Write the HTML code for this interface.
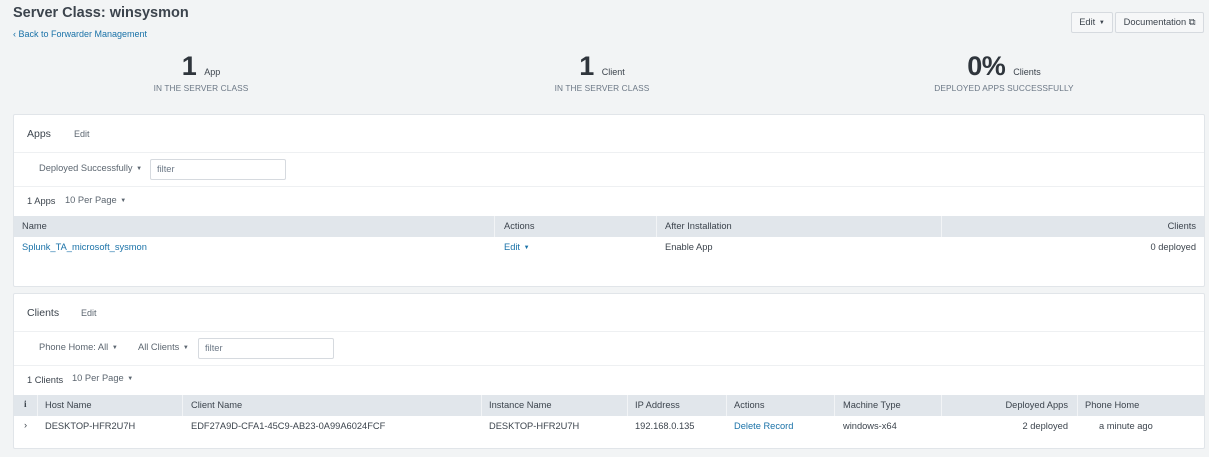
<!DOCTYPE html>
<html><head><meta charset="utf-8"><style>
*{box-sizing:border-box;margin:0;padding:0}
body{width:1209px;height:457px;background:#f2f4f5;font-family:"Liberation Sans",sans-serif;color:#3c444d;position:relative;overflow:hidden;font-size:9.3px}
.a{position:absolute;white-space:nowrap}
.blue{color:#1a72a8}
.btn{position:absolute;top:12px;height:21px;border:1px solid #d6dadf;border-radius:2px;background:#f6f7f8;font-size:9.3px;line-height:19px;text-align:center;color:#3c444d}
.stat{position:absolute;width:300px;text-align:center}
.big{font-size:27px;font-weight:bold;color:#2f353c;letter-spacing:-0.5px}
.unit{font-size:9px;margin-left:8px}
.lab{font-size:8.3px;color:#6b7785;letter-spacing:0.1px;margin-top:1px}
.panel{position:absolute;left:13px;width:1192px;background:#fff;border:1px solid #e1e5e9;border-radius:2px}
.line{position:absolute;left:0;right:0;height:1px;background:#eef0f2}
.thead{position:absolute;left:0;right:0;height:21px;background:#e1e6eb}
.col{position:absolute;top:0;height:21px;border-left:1px solid #f2f4f6}
.input{position:absolute;height:21px;border:1px solid #d6dadf;border-radius:2px;background:#fff;font-size:9.3px;color:#6b7785;padding-left:6px;line-height:19px}
.caret{font-size:6px;margin-left:1px;vertical-align:1px}
</style></head><body>
<div class="a" style="left:13px;top:5px;font-size:14.5px;font-weight:bold;color:#3c444d">Server Class: winsysmon</div>
<div class="a blue" style="left:13px;top:29px;font-size:9px">‹ Back to Forwarder Management</div>
<div class="btn" style="left:1071px;width:42px">Edit <span class="caret">▼</span></div>
<div class="btn" style="left:1115px;width:89px">Documentation ⧉</div>

<div class="stat" style="left:51px;top:51px"><span class="big">1</span><span class="unit">App</span><div class="lab">IN THE SERVER CLASS</div></div>
<div class="stat" style="left:452px;top:51px"><span class="big">1</span><span class="unit">Client</span><div class="lab">IN THE SERVER CLASS</div></div>
<div class="stat" style="left:854px;top:51px"><span class="big">0%</span><span class="unit">Clients</span><div class="lab">DEPLOYED APPS SUCCESSFULLY</div></div>

<div class="panel" style="top:114px;height:173px">
  <div class="a" style="left:13px;top:13px;font-size:10.5px">Apps</div>
  <div class="a" style="left:60px;top:14px;font-size:9px;color:#5c6670">Edit</div>
  <div class="line" style="top:37px"></div>
  <div class="a" style="left:25px;top:48px;color:#5c6670">Deployed Successfully <span class="caret">▼</span></div>
  <div class="input" style="left:136px;top:44px;width:136px">filter</div>
  <div class="line" style="top:71px"></div>
  <div class="a" style="left:13px;top:81px">1 Apps</div>
  <div class="a" style="left:51px;top:80px;color:#5c6670">10 Per Page <span class="caret">▼</span></div>
  <div class="thead" style="top:101px">
    <div class="a" style="left:8px;top:5px">Name</div>
    <div class="col" style="left:480px"></div><div class="a" style="left:490px;top:5px">Actions</div>
    <div class="col" style="left:642px"></div><div class="a" style="left:651px;top:5px">After Installation</div>
    <div class="col" style="left:927px"></div><div class="a" style="right:8px;top:5px">Clients</div>
  </div>
  <div class="a blue" style="left:8px;top:127px">Splunk_TA_microsoft_sysmon</div>
  <div class="a blue" style="left:490px;top:127px">Edit <span class="caret">▼</span></div>
  <div class="a" style="left:651px;top:127px">Enable App</div>
  <div class="a" style="right:8px;top:127px">0 deployed</div>
</div>

<div class="panel" style="top:293px;height:156px">
  <div class="a" style="left:13px;top:13px;font-size:10.5px">Clients</div>
  <div class="a" style="left:67px;top:14px;font-size:9px;color:#5c6670">Edit</div>
  <div class="line" style="top:37px"></div>
  <div class="a" style="left:25px;top:48px;color:#5c6670">Phone Home: All <span class="caret">▼</span></div>
  <div class="a" style="left:124px;top:48px;color:#5c6670">All Clients <span class="caret">▼</span></div>
  <div class="input" style="left:184px;top:44px;width:136px">filter</div>
  <div class="line" style="top:71px"></div>
  <div class="a" style="left:13px;top:81px">1 Clients</div>
  <div class="a" style="left:58px;top:79px;color:#5c6670">10 Per Page <span class="caret">▼</span></div>
  <div class="thead" style="top:101px">
    <div class="a" style="left:10px;top:5px;font-weight:bold;font-family:'Liberation Serif',serif">i</div>
    <div class="col" style="left:23px"></div><div class="a" style="left:31px;top:5px">Host Name</div>
    <div class="col" style="left:168px"></div><div class="a" style="left:177px;top:5px">Client Name</div>
    <div class="col" style="left:467px"></div><div class="a" style="left:475px;top:5px">Instance Name</div>
    <div class="col" style="left:613px"></div><div class="a" style="left:621px;top:5px">IP Address</div>
    <div class="col" style="left:712px"></div><div class="a" style="left:720px;top:5px">Actions</div>
    <div class="col" style="left:820px"></div><div class="a" style="left:829px;top:5px">Machine Type</div>
    <div class="col" style="left:927px"></div><div class="a" style="right:136px;top:5px">Deployed Apps</div>
    <div class="col" style="left:1063px"></div><div class="a" style="left:1071px;top:5px">Phone Home</div>
  </div>
  <div class="a" style="left:10px;top:126px">›</div>
  <div class="a" style="left:31px;top:127px">DESKTOP-HFR2U7H</div>
  <div class="a" style="left:177px;top:127px">EDF27A9D-CFA1-45C9-AB23-0A99A6024FCF</div>
  <div class="a" style="left:475px;top:127px">DESKTOP-HFR2U7H</div>
  <div class="a" style="left:621px;top:127px">192.168.0.135</div>
  <div class="a blue" style="left:720px;top:127px">Delete Record</div>
  <div class="a" style="left:829px;top:127px">windows-x64</div>
  <div class="a" style="right:136px;top:127px">2 deployed</div>
  <div class="a" style="left:1085px;top:127px">a minute ago</div>
</div>
</body></html>
